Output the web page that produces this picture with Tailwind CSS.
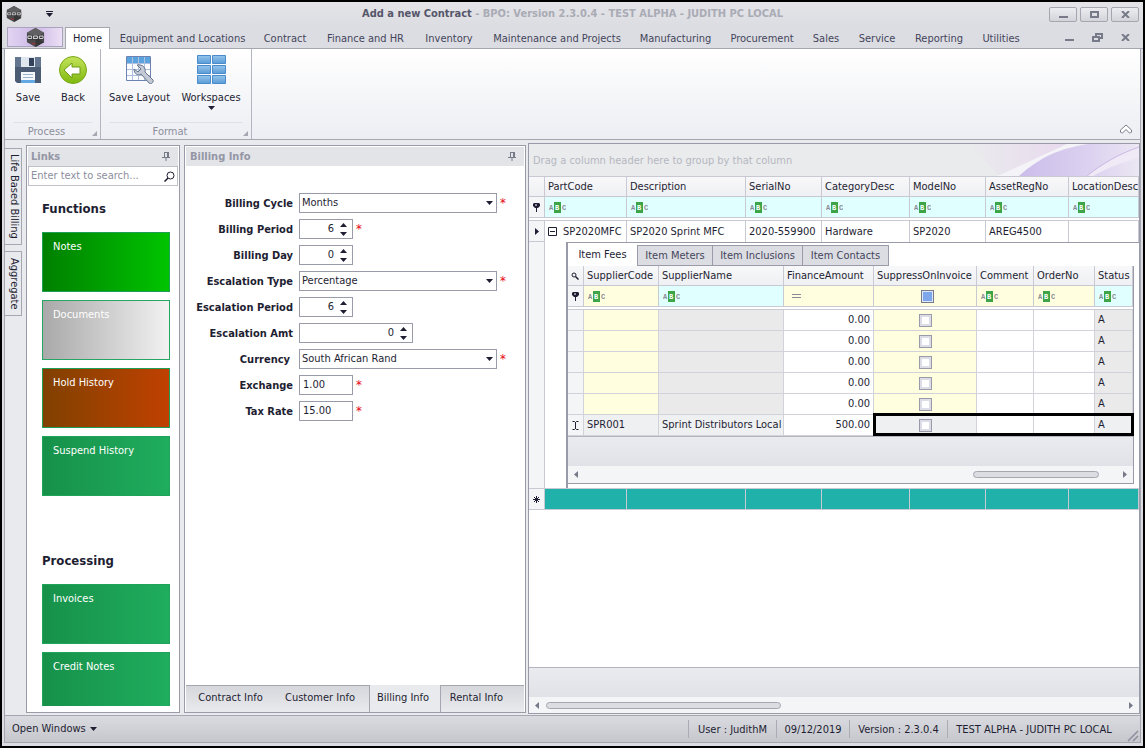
<!DOCTYPE html>
<html lang="en">
<head>
  <meta charset="UTF-8" />
  <meta name="viewport" content="width=device-width,initial-scale=1.0" />
  <title>Add a new Contract - BPO</title>
  <script src="https://cdn.jsdelivr.net/npm/@tailwindcss/browser@4"></script>
</head>
<body class="min-h-screen flex flex-col border-2 border-black bg-[#dcdde2] font-['DejaVu_Sans_Condensed','DejaVu_Sans',sans-serif] text-[11px] leading-[14px] text-[#1e1e32]">

<!-- Shared icons -->
<svg class="hidden">
  <symbol id="abc" viewBox="0 0 17 12">
    <rect x="5" y="1" width="7" height="11" fill="#3da447" />
    <g font-family="Liberation Mono, monospace" font-size="7" font-weight="bold">
      <text x="0" y="9" fill="#8a8a94">A</text>
      <text x="6" y="9" fill="#fff">B</text>
      <text x="13" y="9" fill="#8a8a94">C</text>
    </g>
  </symbol>
  <symbol id="filter" viewBox="0 0 7 9">
    <path d="M1 0h5l1 1v2L5 5H4v4H3V5H2L0 3V1z" fill="#1e1e32" /><path d="M2 1.500h2v1H2z" fill="#fff" />
  </symbol>
  <symbol id="pin" viewBox="0 0 8 9">
    <path d="M0 5.500h8M2.500 0v5M5.500 0v5M2 .500h4M4 6v3" stroke="#777a88" fill="none" /><path d="M5 0h2v5H5z" fill="#777a88" />
  </symbol>
  <symbol id="down" viewBox="0 0 7 4"><path d="M0 0h7L3.500 4z" fill="#1e1e32" /></symbol>
  <symbol id="up" viewBox="0 0 7 4"><path d="M0 4h7L3.500 0z" fill="#1e1e32" /></symbol>
  <symbol id="left" viewBox="0 0 4 7"><path d="M4 0v7L0 3.500z" fill="#777a88" /></symbol>
  <symbol id="right" viewBox="0 0 4 7"><path d="M0 0v7L4 3.500z" fill="#777a88" /></symbol>
  <symbol id="logo" viewBox="0 0 20 20">
    <path d="M10 0l9 5v10l-9 5-9-5V5z" fill="#4a4a4c" />
    <path d="M10 0l9 5-9 4-9-4z" fill="#606062" /><path d="M10 10l9 5-9 5z" fill="#363638" />
    <path d="M1 8h18v4H1z" fill="#2c2c2e" />
    <path d="M2 8.500h4v2.500H2zM8 11.500v-3h4v2.500H8M14 8.500h4v2.500h-4z" fill="none" stroke="#e4e4e6" stroke-width="1" />
    <path d="M6 15l2 2 2-1" stroke="#c03030" fill="none" />
  </symbol>
</svg>

<!-- Title bar -->
<header class="flex items-center h-6 px-1 bg-linear-to-b from-[#e4e4e8] to-[#dcdde2]">
  <div class="flex-1 flex items-center gap-6">
    <svg class="w-4 h-4"><use href="#logo" /></svg>
    <button aria-label="Customize toolbar"><svg class="w-[7px] h-1.5" viewBox="0 0 7 6"><path d="M0 0h7v1H0zM0 2h7L3.500 6z" fill="#1e1e32" /></svg></button>
  </div>
  <h1 class="font-bold text-[#55566a]">Add a new Contract <span class="text-[#a9abb5]">- BPO: Version 2.3.0.4 - TEST ALPHA - JUDITH PC LOCAL</span></h1>
  <div class="flex-1 flex justify-end gap-[3px]">
    <button aria-label="Minimize" class="grid place-items-center w-7 h-[15px] border border-[#a4a6b0] rounded-[2px] bg-linear-to-b from-[#ececf0] to-[#d3d4da]"><svg class="w-[9px] h-2" viewBox="0 0 9 8"><path d="M0 6h9v2H0z" fill="#777a88" /></svg></button>
    <button aria-label="Maximize" class="grid place-items-center w-7 h-[15px] border border-[#a4a6b0] rounded-[2px] bg-linear-to-b from-[#ececf0] to-[#d3d4da]"><svg class="w-[9px] h-[7px]" viewBox="0 0 9 7"><path d="M1 1h7v5H1z" fill="none" stroke="#777a88" stroke-width="2" /></svg></button>
    <button aria-label="Close" class="grid place-items-center w-7 h-[15px] border border-[#a4a6b0] rounded-[2px] bg-linear-to-b from-[#ececf0] to-[#d3d4da]"><svg class="w-[9px] h-[7px]" viewBox="0 0 9 7"><path d="M1 0l7 7M8 0L1 7" stroke="#777a88" stroke-width="2" /></svg></button>
  </div>
</header>

<!-- Ribbon tabs -->
<nav class="flex items-end h-[23px] px-[5px] border-b border-[#a4a6b0] text-[#44455c]">
  <button aria-label="Application menu" class="grid place-items-center w-14 h-5 mb-px mr-0.5 border border-[#a9a3bd] bg-linear-to-r from-[#e2d4f2] via-[#cdb9e6] to-[#ecdff5]"><svg class="w-[19px] h-[19px]"><use href="#logo" /></svg></button>
  <a href="#" class="relative z-10 -mb-px w-[45px] h-[22px] pt-1 text-center text-[#1e1e32] bg-white border border-b-0 border-[#a4a6b0]">Home</a>
  <a href="#" class="ml-0.5 w-[141px] h-4 text-center">Equipment and Locations</a>
  <a href="#" class="w-16 h-4 text-center">Contract</a>
  <a href="#" class="w-[97px] h-4 text-center">Finance and HR</a>
  <a href="#" class="w-[70px] h-4 text-center">Inventory</a>
  <a href="#" class="w-[146px] h-4 text-center">Maintenance and Projects</a>
  <a href="#" class="w-[91px] h-4 text-center">Manufacturing</a>
  <a href="#" class="w-[82px] h-4 text-center">Procurement</a>
  <a href="#" class="w-[46px] h-4 text-center">Sales</a>
  <a href="#" class="w-14 h-4 text-center">Service</a>
  <a href="#" class="w-[68px] h-4 text-center">Reporting</a>
  <a href="#" class="w-14 h-4 text-center">Utilities</a>
  <div class="ml-auto flex items-center gap-[18px] h-[22px] pr-2">
    <button aria-label="Minimize child"><svg class="w-[9px] h-2" viewBox="0 0 9 8"><path d="M0 6h9v2H0z" fill="#777a88" /></svg></button>
    <button aria-label="Restore child"><svg class="w-[11px] h-[9px]" viewBox="0 0 11 9"><path d="M4 3V1h6v4H8M1 4h6v4H1z" fill="none" stroke="#777a88" stroke-width="2" /></svg></button>
    <button aria-label="Close child"><svg class="w-[9px] h-[7px]" viewBox="0 0 9 7"><path d="M1 0l7 7M8 0L1 7" stroke="#777a88" stroke-width="2" /></svg></button>
  </div>
</nav>

<!-- Ribbon -->
<section class="flex h-[91px] mx-0.5 border-x border-b border-[#a4a6b0] bg-linear-to-b from-white to-[#edeef3]">
  <div class="relative flex flex-col w-24 border-r border-[#b4b5c0]">
    <div class="flex flex-1 pt-[5px]">
      <button class="flex flex-col items-center w-[46px] gap-[7px]">
        <svg class="w-7 h-[30px]" viewBox="0 0 28 30">
          <path d="M1 3h26v26H3l-2-2z" fill="#4b5b74" /><path d="M1 3h26v10H1z" fill="#64758f" /><path d="M7 3h14v10H7z" fill="#dfe6ee" /><path d="M15 4h5v8h-5z" fill="#33415a" />
          <path d="M7 18h14v11H7z" fill="#f4f8fc" /><path d="M7 26h14v3H7z" fill="#63a9e4" /><path d="M9 20.500h10M9 23.500h10" stroke="#9db3cc" />
        </svg>
        Save
      </button>
      <button class="flex flex-col items-center w-11 gap-[7px]">
        <svg class="w-[30px] h-[30px]" viewBox="0 0 30 30">
          <defs><linearGradient id="lime" x2="0" y2="1"><stop stop-color="#c4e35b" /><stop offset="1" stop-color="#7fb80e" /></linearGradient></defs>
          <circle cx="15" cy="16" r="13.500" fill="url(#lime)" stroke="#78a816" />
          <path d="M6 16l8-7v4h8v7h-8v4z" fill="#fff" stroke="#6d9c14" stroke-width="1" />
        </svg>
        Back
      </button>
    </div>
    <div class="h-[17px] mx-2 pr-3 border-t border-[#e0e1e8] pt-0.5 text-center text-[#8c8e9c]">Process</div>
    <svg class="absolute right-[3px] bottom-[3px] w-[5px] h-[5px]" viewBox="0 0 5 5"><path d="M5 0v5H0z" fill="#a4a6b0" /></svg>
  </div>
  <div class="relative flex flex-col w-[151px] border-r border-[#b4b5c0]">
    <div class="flex flex-1 pt-[5px] pl-0.5">
      <button class="flex flex-col items-center w-[73px] gap-[7px] whitespace-nowrap">
        <svg class="w-[30px] h-[30px]" viewBox="0 0 30 30">
          <path d="M1.500 2.500h24v24h-24z" fill="#fbfcff" stroke="#6d82b0" /><path d="M2 3h23v6H2z" fill="#5ba3de" />
          <path d="M7.500 3v23M13.500 3v23M19.500 3v23M2 9.500h23M2 15.500h23M2 21.500h23" stroke="#aebfdf" fill="none" />
          <path d="M12 11l4 4-3 3-4-3c0 5 4 7 7 5l8 9c2 2 5-1 4-3l-8-8c1-4-2-8-8-7z" fill="#c3cad6" stroke="#66748c" />
        </svg>
        Save Layout
      </button>
      <button class="flex flex-col items-center w-[70px] gap-[7px]">
        <svg class="w-[30px] h-[30px]" viewBox="0 0 30 30">
          <defs><linearGradient id="sky" x2="0" y2="1"><stop stop-color="#95c5ec" /><stop offset="1" stop-color="#5a9bd6" /></linearGradient></defs>
          <g fill="url(#sky)" stroke="#4a8ccb"><path d="M1.500 1.500h13v8h-13z" /><path d="M16.500 1.500h13v8h-13z" /><path d="M1.500 11.500h13v8h-13z" /><path d="M16.500 11.500h13v8h-13z" /><path d="M1.500 21.500h13v8h-13z" /><path d="M16.500 21.500h13v8h-13z" /></g>
        </svg>
        Workspaces
        <svg class="w-[7px] h-1 -mt-1.5"><use href="#down" /></svg>
      </button>
    </div>
    <div class="h-[17px] mx-2 pr-3 border-t border-[#e0e1e8] pt-0.5 text-center text-[#8c8e9c]">Format</div>
    <svg class="absolute right-[3px] bottom-[3px] w-[5px] h-[5px]" viewBox="0 0 5 5"><path d="M5 0v5H0z" fill="#a4a6b0" /></svg>
  </div>
  <button aria-label="Collapse ribbon" class="ml-auto self-end pr-2 pb-1"><svg class="w-3 h-[11px]" viewBox="0 0 12 11"><path d="M.500 6L6 1l5.500 5v2l-1 1h-1L6 5.500 2.500 9h-1l-1-1z" fill="#fff" stroke="#777a88" /></svg></button>
</section>

<!-- Work area -->
<main class="flex flex-1 mx-0.5 border-x border-[#a4a6b0] bg-[#e9eaed]">
  <!-- Collapsed side panels -->
  <aside class="flex flex-col gap-1.5 w-[21px] pt-2">
    <button class="w-[17px] h-[97px] pl-px border border-l-0 border-[#a4a6b0] [writing-mode:vertical-rl] whitespace-nowrap">Life Based Billing</button>
    <button class="w-[17px] h-[65px] pl-px border border-l-0 border-[#a4a6b0] [writing-mode:vertical-rl] whitespace-nowrap">Aggregate</button>
  </aside>

  <!-- Links -->
  <section class="flex flex-col w-[154px] mt-[5px] mb-0.5 p-px border border-[#9a9ba8] bg-white">
    <header class="flex items-center justify-between h-[19px] pl-[3px] pr-2 bg-[#e3e4e8] font-bold text-[#9496a6]"><h2>Links</h2><svg class="w-2 h-[9px]"><use href="#pin" /></svg></header>
    <div class="flex items-center h-5 pr-0.5 border border-[#bfc0c9]">
      <input type="text" aria-label="Search links" placeholder="Enter text to search..." class="flex-1 min-w-0 pl-0.5 outline-none placeholder:text-[#8c8e9c]" />
      <svg class="w-[11px] h-[11px]" viewBox="0 0 11 11"><circle cx="6.500" cy="4.500" r="3.500" fill="none" stroke="#1e1e32" /><path d="M4 7L.500 10.500" stroke="#1e1e32" stroke-width="1.500" /></svg>
    </div>
    <div class="flex flex-col gap-2 pl-[14px] pr-2 text-white">
      <h3 class="h-[38px] pt-4 text-[13px] font-bold text-[#1e1e32]">Functions</h3>
      <button class="flex h-15 px-2.5 pt-[7px] border border-[#1f9e58] bg-linear-to-r from-[#008000] to-[#00c400]">Notes</button>
      <button class="flex h-15 px-2.5 pt-[7px] border border-[#27a562] bg-linear-to-r from-[#a9a9a9] to-[#f2f2f2]">Documents</button>
      <button class="flex h-15 px-2.5 pt-[7px] border border-[#1f9e58] bg-linear-to-r from-[#804000] to-[#c04000]">Hold History</button>
      <button class="flex h-15 px-2.5 pt-[7px] border border-[#1fa25a] bg-linear-to-r from-[#17914a] to-[#1fad5e]">Suspend History</button>
      <h3 class="h-[72px] pt-[50px] text-[13px] font-bold text-[#1e1e32]">Processing</h3>
      <button class="flex h-15 px-2.5 pt-[7px] border border-[#1fa25a] bg-linear-to-r from-[#17914a] to-[#1fad5e]">Invoices</button>
      <button class="flex h-[54px] px-2.5 pt-[7px] border border-b-0 border-[#1fa25a] bg-linear-to-r from-[#17914a] to-[#1fad5e]">Credit Notes</button>
    </div>
  </section>

  <!-- Billing info -->
  <section class="flex flex-col w-[342px] ml-1 mr-0.5 mt-[5px] mb-0.5 p-px pb-0 border border-[#9a9ba8] bg-white">
    <header class="flex items-center justify-between h-[19px] pl-1 pr-2 bg-[#e3e4e8] font-bold text-[#9496a6]"><h2>Billing Info</h2><svg class="w-2 h-[9px]"><use href="#pin" /></svg></header>
    <form class="flex-1 grid grid-cols-[107px_1fr] auto-rows-[20px] gap-x-1.5 gap-y-1.5 content-start pt-[27px]">
      <label for="cycle" class="text-right font-bold pt-1">Billing Cycle</label>
      <div class="flex gap-[3px]">
        <div class="relative w-[198px]">
          <select id="cycle" class="appearance-none w-full h-5 pl-0.5 border border-[#9a9ba8] bg-white"><option>Months</option></select>
          <svg class="absolute right-1 top-2 w-[7px] h-1 pointer-events-none"><use href="#down" /></svg>
        </div>
        <span class="text-[13px] leading-5 text-red-600">*</span>
      </div>
      <label for="period" class="text-right font-bold pt-1">Billing Period</label>
      <div class="flex gap-[3px]">
        <div class="flex w-[54px] border border-[#9a9ba8]">
          <input id="period" type="text" value="6" class="flex-1 min-w-0 text-right outline-none" />
          <div class="flex flex-col justify-center gap-[5px] w-[18px] items-center"><button type="button" aria-label="Increase"><svg class="w-[7px] h-1"><use href="#up" /></svg></button><button type="button" aria-label="Decrease"><svg class="w-[7px] h-1"><use href="#down" /></svg></button></div>
        </div>
        <span class="text-[13px] leading-5 text-red-600">*</span>
      </div>
      <label for="day" class="text-right font-bold pt-1">Billing Day</label>
      <div class="flex w-[54px] border border-[#9a9ba8]">
        <input id="day" type="text" value="0" class="flex-1 min-w-0 text-right outline-none" />
        <div class="flex flex-col justify-center gap-[5px] w-[18px] items-center"><button type="button" aria-label="Increase"><svg class="w-[7px] h-1"><use href="#up" /></svg></button><button type="button" aria-label="Decrease"><svg class="w-[7px] h-1"><use href="#down" /></svg></button></div>
      </div>
      <label for="esctype" class="text-right font-bold pt-1">Escalation Type</label>
      <div class="flex gap-[3px]">
        <div class="relative w-[198px]">
          <select id="esctype" class="appearance-none w-full h-5 pl-0.5 border border-[#9a9ba8] bg-white"><option>Percentage</option></select>
          <svg class="absolute right-1 top-2 w-[7px] h-1 pointer-events-none"><use href="#down" /></svg>
        </div>
        <span class="text-[13px] leading-5 text-red-600">*</span>
      </div>
      <label for="escperiod" class="text-right font-bold pt-1">Escalation Period</label>
      <div class="flex w-[54px] border border-[#9a9ba8]">
        <input id="escperiod" type="text" value="6" class="flex-1 min-w-0 text-right outline-none" />
        <div class="flex flex-col justify-center gap-[5px] w-[18px] items-center"><button type="button" aria-label="Increase"><svg class="w-[7px] h-1"><use href="#up" /></svg></button><button type="button" aria-label="Decrease"><svg class="w-[7px] h-1"><use href="#down" /></svg></button></div>
      </div>
      <label for="escamt" class="text-right font-bold pt-1">Escalation Amt</label>
      <div class="flex w-[114px] border border-[#9a9ba8]">
        <input id="escamt" type="text" value="0" class="flex-1 min-w-0 text-right outline-none" />
        <div class="flex flex-col justify-center gap-[5px] w-[18px] items-center"><button type="button" aria-label="Increase"><svg class="w-[7px] h-1"><use href="#up" /></svg></button><button type="button" aria-label="Decrease"><svg class="w-[7px] h-1"><use href="#down" /></svg></button></div>
      </div>
      <label for="currency" class="text-right font-bold pt-1 pr-[3px]">Currency</label>
      <div class="flex gap-[3px]">
        <div class="relative w-[198px]">
          <select id="currency" class="appearance-none w-full h-5 pl-0.5 border border-[#9a9ba8] bg-white"><option>South African Rand</option></select>
          <svg class="absolute right-1 top-2 w-[7px] h-1 pointer-events-none"><use href="#down" /></svg>
        </div>
        <span class="text-[13px] leading-5 text-red-600">*</span>
      </div>
      <label for="exchange" class="text-right font-bold pt-1">Exchange</label>
      <div class="flex gap-[3px]"><input id="exchange" type="text" value="1.00" class="w-[54px] pl-[3px] border border-[#9a9ba8]" /><span class="text-[13px] leading-5 text-red-600">*</span></div>
      <label for="tax" class="text-right font-bold pt-1">Tax Rate</label>
      <div class="flex gap-[3px]"><input id="tax" type="text" value="15.00" class="w-[54px] pl-[3px] border border-[#9a9ba8]" /><span class="text-[13px] leading-5 text-red-600">*</span></div>
    </form>
    <nav class="flex h-[27px] bg-[#e9eaed] text-center">
      <a href="#" class="w-[89px] pt-[5px] border-t border-[#a4a6b0] bg-linear-to-b from-[#d6d7dc] to-[#e9eaed]">Contract Info</a>
      <a href="#" class="w-[95px] pr-1 pt-[5px] border-t border-r border-[#a4a6b0] bg-linear-to-b from-[#d6d7dc] to-[#e9eaed]">Customer Info</a>
      <a href="#" class="w-[70px] pr-1 pt-1.5">Billing Info</a>
      <a href="#" class="flex-1 pr-3 pt-[5px] border-t border-l border-[#a4a6b0] bg-linear-to-b from-[#d6d7dc] to-[#e9eaed]">Rental Info</a>
    </nav>
  </section>

  <!-- Parts grid -->
  <section class="flex-1 min-w-0 flex flex-col mt-[3px] mb-px border border-[#9a9ba8] bg-white">
    <div class="relative h-8 pl-1 pt-2.5 overflow-hidden bg-[#eaebed] text-[#b5b7c0] whitespace-nowrap">
      <svg class="absolute right-0 top-0 w-[170px] h-8" viewBox="0 0 170 32">
        <defs>
          <linearGradient id="pink"><stop stop-color="#eaebed" /><stop offset=".6" stop-color="#e8d9ee" /><stop offset="1" stop-color="#eee8f4" /></linearGradient>
          <linearGradient id="violet"><stop stop-color="#cbbcea" /><stop offset=".6" stop-color="#dcd2f0" /><stop offset="1" stop-color="#ebe7f3" /></linearGradient>
        </defs>
        <path d="M0 0h170v32H30z" fill="url(#pink)" />
        <path d="M28 32C60 18 80 8 98 0h22C90 6 70 18 50 32z" fill="#f4f3f7" />
        <path d="M50 32C70 14 90 4 120 0h50v32z" fill="url(#violet)" />
        <path d="M118 32C132 22 150 10 170 2v12c-16 4-32 10-46 18z" fill="#efeaf6" />
        <path d="M118 32C132 20 150 10 170 3" stroke="#cdb8e6" fill="none" />
      </svg>
      <span class="relative">Drag a column header here to group by that column</span>
    </div>
    <table class="w-full table-fixed border-separate border-spacing-0 whitespace-nowrap [&_th]:font-normal [&_th]:text-left">
      <colgroup><col class="w-4"><col class="w-[82px]"><col class="w-[119px]"><col class="w-[76px]"><col class="w-[88px]"><col class="w-[76px]"><col class="w-[83px]"><col></colgroup>
      <thead>
        <tr class="h-[21px] [&>th]:border-t [&>th]:border-r [&>th]:border-b [&>th]:border-[#c8c9d2] [&>th]:bg-linear-to-b [&>th]:from-[#f8f8fa] [&>th]:to-[#eff0f3] [&>th]:pl-[3px]">
          <th></th><th>PartCode</th><th>Description</th><th>SerialNo</th><th>CategoryDesc</th><th>ModelNo</th><th>AssetRegNo</th><th>LocationDesc</th>
        </tr>
        <tr class="h-[21px] [&>td]:border-r [&>td]:border-b [&>td]:border-[#c8c9d2] [&>td]:bg-[#e0ffff] [&>td]:pl-1">
          <th class="border-r border-b border-[#c8c9d2] bg-[#f4f5f7]"><svg class="w-[7px] h-[9px] mx-auto"><use href="#filter" /></svg></th>
          <td><svg class="w-[17px] h-3"><use href="#abc" /></svg></td><td><svg class="w-[17px] h-3"><use href="#abc" /></svg></td><td><svg class="w-[17px] h-3"><use href="#abc" /></svg></td><td><svg class="w-[17px] h-3"><use href="#abc" /></svg></td><td><svg class="w-[17px] h-3"><use href="#abc" /></svg></td><td><svg class="w-[17px] h-3"><use href="#abc" /></svg></td><td><svg class="w-[17px] h-3"><use href="#abc" /></svg></td>
        </tr>
        <tr class="h-[3px]"><td colspan="8" class="border-b border-[#c8c9d2]"></td></tr>
      </thead>
      <tbody>
        <tr class="h-[21px] [&>td]:border-r [&>td]:border-[#c8c9d2] [&>td]:pl-[3px]">
          <th class="border-r border-b border-[#c8c9d2] bg-[#f4f5f7]"><svg class="w-1 h-[7px] mx-auto" viewBox="0 0 4 7"><path d="M0 0v7L4 3.500z" fill="#1e1e32" /></svg></th>
          <td><div class="flex items-center gap-1.5"><button aria-label="Collapse row"><svg class="w-[9px] h-[9px]" viewBox="0 0 9 9"><path d="M.500 .500h8v8h-8zM2 4.500h5" fill="none" stroke="#1e1e32" /></svg></button>SP2020MFC</div></td><td>SP2020 Sprint MFC</td><td>2020-559900</td><td>Hardware</td><td>SP2020</td><td>AREG4500</td><td></td>
        </tr>
        <tr>
          <td class="border-r border-b border-[#c8c9d2] bg-[#f4f5f7]"></td>
          <td colspan="7" class="pl-[21px] border-b border-[#c8c9d2]">
            <div class="pt-0.5 pb-1 border-l-2 border-t border-[#9a9ba8]">
              <nav class="flex h-[21px] mr-[5px] text-[#44455c] text-center">
                <a href="#" class="w-[70px] pt-[3px] bg-white border-r border-[#9a9ba8] text-[#1e1e32]">Item Fees</a>
                <a href="#" class="w-[75px] pt-[3px] bg-[#dcdde2] border border-l-0 border-[#9a9ba8]">Item Meters</a>
                <a href="#" class="w-[90px] pt-[3px] bg-[#dcdde2] border border-l-0 border-[#9a9ba8]">Item Inclusions</a>
                <a href="#" class="w-[86px] pt-[3px] bg-[#dcdde2] border border-l-0 border-[#9a9ba8]">Item Contacts</a>
              </nav>
              <div class="relative mr-[5px] border-r border-b border-[#9a9ba8]">
                <table class="w-full table-fixed border-separate border-spacing-0">
                  <colgroup><col class="w-4"><col class="w-[75px]"><col class="w-[125px]"><col class="w-[90px]"><col class="w-[103px]"><col class="w-[57px]"><col class="w-[61px]"><col></colgroup>
                  <thead>
                    <tr class="h-5 [&>th]:border-r [&>th]:border-b [&>th]:border-[#c8c9d2] [&>th]:bg-linear-to-b [&>th]:from-[#f8f8fa] [&>th]:to-[#eff0f3] [&>th]:pl-[3px]">
                      <th><svg class="w-2 h-2" viewBox="0 0 8 8"><circle cx="3" cy="3" r="2" fill="none" stroke="#1e1e32" /><path d="M4.500 4.500l3 3" stroke="#1e1e32" stroke-width="1.500" /></svg></th><th>SupplierCode</th><th>SupplierName</th><th>FinanceAmount</th><th>SuppressOnInvoice</th><th>Comment</th><th>OrderNo</th><th>Status</th>
                    </tr>
                    <tr class="h-[21px] [&>td]:border-r [&>td]:border-b [&>td]:border-[#c8c9d2] [&>td]:pl-1 [&>td]:bg-[#ffffe0]">
                      <th class="border-r border-b border-[#c8c9d2] bg-[#f4f5f7]"><svg class="w-[7px] h-[9px] mx-auto"><use href="#filter" /></svg></th>
                      <td><svg class="w-[17px] h-3"><use href="#abc" /></svg></td>
                      <td class="bg-[#e0ffff]!"><svg class="w-[17px] h-3"><use href="#abc" /></svg></td>
                      <td><svg class="w-[9px] h-1 ml-1" viewBox="0 0 9 4"><path d="M0 .500h9M0 3.500h9" stroke="#8a8a94" /></svg></td>
                      <td><input type="checkbox" aria-label="Filter SuppressOnInvoice" class="appearance-none block mx-auto w-[13px] h-[13px] border border-[#777a88] bg-[#7ea6ea] shadow-[inset_0_0_0_1px_#dfe6f8]"></td>
                      <td><svg class="w-[17px] h-3"><use href="#abc" /></svg></td>
                      <td><svg class="w-[17px] h-3"><use href="#abc" /></svg></td>
                      <td class="bg-[#e0ffff]!"><svg class="w-[17px] h-3"><use href="#abc" /></svg></td>
                    </tr>
                    <tr class="h-[3px]"><td colspan="8" class="border-b border-[#c8c9d2]"></td></tr>
                  </thead>
                  <tbody id="fees" class="[&_td]:border-r [&_td]:border-b [&_td]:border-[#d2d3da] [&_td]:px-[3px] [&_tr]:h-[21px]"></tbody>
                </table>
                <!-- Marked cells of the new fee -->
                <div class="absolute right-[-1px] bottom-[47px] w-[261px] h-[23px] border-3 border-black pointer-events-none"></div>
                <div class="h-[30px] border-t border-[#b4b5c0] bg-linear-to-b from-[#eaebef] to-[#e1e2e7]"></div>
                <div class="flex items-center h-[17px] px-1.5 bg-[#f4f5f7]">
                  <svg class="w-1 h-[7px]"><use href="#left" /></svg>
                  <div class="ml-auto mr-6 w-[126px] h-[7px] border border-[#a4a6b0] rounded-full bg-[#dcdde2]"></div>
                  <svg class="w-1 h-[7px]"><use href="#right" /></svg>
                </div>
              </div>
            </div>
          </td>
        </tr>
        <tr class="h-[21px] [&>td]:bg-[#20b2aa] [&>td]:border-r [&>td]:border-b [&>td]:border-[#c8c9d2]">
          <th class="border-r border-b border-[#c8c9d2] bg-[#f4f5f7]"><svg class="w-[7px] h-[7px] mx-auto" viewBox="0 0 7 7"><path d="M3.500 0v7M0 3.500h7M1 1l5 5M6 1L1 6" stroke="#1e1e32" /></svg></th>
          <td></td><td></td><td></td><td></td><td></td><td></td><td></td>
        </tr>
      </tbody>
    </table>
    <div class="mt-auto h-[30px] border-t border-[#b4b5c0] bg-linear-to-b from-[#eaebef] to-[#e1e2e7]"></div>
    <div class="flex items-center h-4 px-1.5 bg-[#f4f5f7]">
      <svg class="w-1 h-[7px]"><use href="#left" /></svg>
      <div class="ml-[7px] mr-auto w-[235px] h-[7px] border border-[#a4a6b0] rounded-full bg-[#dcdde2]"></div>
      <svg class="w-1 h-[7px]"><use href="#right" /></svg>
    </div>
  </section>
</main>

<!-- Status bar -->
<footer class="flex items-center h-7 mx-0.5 mb-[3px] pl-[7px] border border-[#a4a6b0] bg-linear-to-b from-[#dadbe0] to-[#c6c7cd] whitespace-nowrap">
  <button class="flex items-center gap-1 mr-auto">Open Windows <svg class="w-[7px] h-1"><use href="#down" /></svg></button>
  <span class="w-[88px] h-[18px] pt-[3px] border-l border-[#a9abb5] text-center">User : JudithM</span>
  <span class="w-[73px] h-[18px] pt-[3px] border-l border-[#a9abb5] text-center">09/12/2019</span>
  <span class="w-[98px] h-[18px] pt-[3px] border-l border-[#a9abb5] text-center">Version : 2.3.0.4</span>
  <span class="w-[173px] h-[18px] pt-[3px] border-l border-[#a9abb5] text-center">TEST ALPHA - JUDITH PC LOCAL</span>
  <svg class="self-end w-5 h-3" viewBox="0 0 20 12"><path d="M8 11L18 1M13 11l5-5" stroke="#8c8e9c" stroke-width="1.500" /></svg>
</footer>

<script>
// Item fees: the last line is the one being edited
const fees = [
  { code: '', name: '', amount: '0.00' },
  { code: '', name: '', amount: '0.00' },
  { code: '', name: '', amount: '0.00' },
  { code: '', name: '', amount: '0.00' },
  { code: '', name: '', amount: '0.00' },
  { code: 'SPR001', name: 'Sprint Distributors Local', amount: '500.00', editing: true },
];

document.getElementById('fees').innerHTML = fees.map((fee, i) => `
  <tr>
    <td class="bg-[#f4f5f7]">${fee.editing ? '<svg class="w-[7px] h-[9px] mx-auto" viewBox="0 0 7 9"><path d="M.500 .500h2l1 1 1-1h2M3.500 1v7M.500 8.500h2l1-1 1 1h2" fill="none" stroke="#1e1e32" /></svg>' : ''}</td>
    <td class="${fee.editing ? 'bg-[#eef0f2]' : 'bg-[#ffffe0]'}">${fee.code}</td>
    <td class="${fee.editing ? 'bg-[#eef0f2]' : 'bg-[#eaeaea]'}">${fee.name}</td>
    <td class="text-right">${fee.amount}</td>
    <td class="${fee.editing ? 'bg-[#eef0f2]' : 'bg-[#ffffe0]'}"><input type="checkbox" aria-label="Suppress line ${i + 1}" class="appearance-none block mx-auto w-[13px] h-[13px] border border-[#9a9ba8] bg-white shadow-[inset_0_0_0_2px_#dcdde6]"></td>
    <td></td>
    <td></td>
    <td class="${fee.editing ? 'bg-[#eef0f2]' : 'bg-[#eaeaea]'}">A</td>
  </tr>`).join('');
</script>
</body>
</html>
